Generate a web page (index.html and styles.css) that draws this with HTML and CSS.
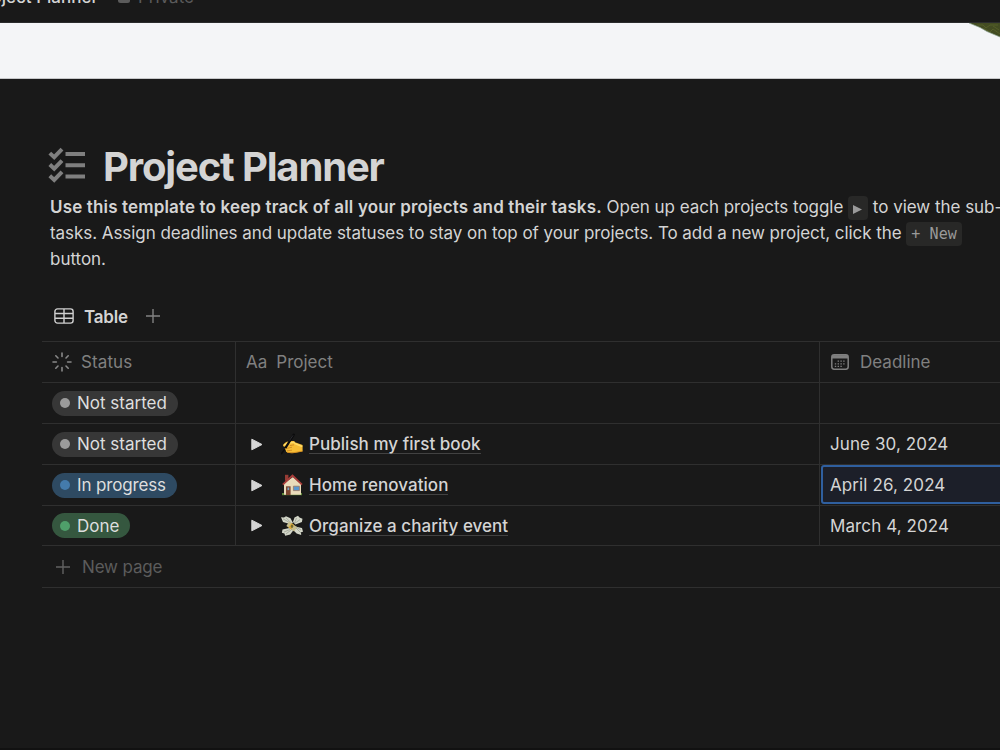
FILE: index.html
```html
<!DOCTYPE html>
<html lang="en">
<head>
    <meta charset="UTF-8" />
    <meta name="viewport" content="width=device-width, initial-scale=1.0"/>
    <title>Project Planner</title>
    <link rel="stylesheet" href="styles.css">
</head>
<body>
<header class="topbar">
    <div class="crumb">Project Planner</div>
    <svg class="lock" viewBox="0 0 14 18"><path d="M4 8V5a3 3 0 0 1 6 0v3" fill="none" stroke="#5b5b5b" stroke-width="1.6"/><rect x="1" y="7" width="12" height="10" rx="2.5" fill="#5b5b5b"/></svg>
    <div class="private">Private</div>
</header>

<div class="cover">
    <svg class="leaf" viewBox="0 0 32 15"><path d="M1 0H32V14L19 8.5 12 4.5Z" fill="#434c22"/><path d="M9 2h6l3 3 4-3h8M15 5l7 4 3-3 7 5M25 3l6 4" fill="none" stroke="#555e29"/><path d="M1 0l11 4.5 7 4L32 14" fill="none" stroke="#8da492" stroke-width=".7"/></svg>
</div>

<main class="page">
    <div class="title">
        <svg class="title-icon" viewBox="0 0 38 36">
            <g fill="none" stroke="#7f7f7f" stroke-width="4">
                <path d="M1.8 6.1l4.4 4.1 7.8-8M1.8 17.5l4.4 4.1 7.8-8M1.8 28.8l4.4 4.1 7.8-8"/>
                <path d="M17.5 7.1H37M17.5 18.2H37M17.5 29.4H37"/>
            </g>
        </svg>
        <h1>Project Planner</h1>
    </div>

    <div class="intro">
        <p><strong>Use this template to keep track of all your projects and their tasks.</strong> <span>Open up each projects toggle</span> <code class="toggle-code"><svg viewBox="0 0 9 9"><path d="M0 0l9 4.5L0 9z" fill="#9a9a9a"/></svg></code> <span>to view the sub-</span></p>
        <p class="line-two">tasks. Assign deadlines and update statuses to stay on top of your projects. To add a new project, click the <code>+ New</code></p>
        <p>button.</p>
    </div>

    <div class="views">
        <svg class="table-icon" viewBox="0 0 20 16"><g fill="none" stroke="#d0d0d0" stroke-width="1.4"><rect x=".9" y=".9" width="18.2" height="14.2" rx="2.6"/><path d="M1 5.5h18M1 10.2h18M10 1v14"/></g></svg>
        <span class="view-name">Table</span>
        <svg class="plus" viewBox="0 0 14 14"><path d="M7 0v14M0 7h14" stroke="#828282" stroke-width="1.4"/></svg>
    </div>

    <div class="table">
        <div class="row head">
            <div class="cell">
                <svg class="status-icon" viewBox="0 0 20 20"><path d="M10 1v3.4M10 15.6V19M1 10h3.4M15.6 10H19M3.8 3.8l2.2 2.2M14 14l2.2 2.2M3.8 16.2L6 14M14 6l2.2-2.2" stroke="#888" stroke-width="1.6" stroke-linecap="round"/></svg>
                <span class="h-status">Status</span>
            </div>
            <div class="cell"><span class="aa">Aa</span><span class="h-project">Project</span></div>
            <div class="cell">
                <svg class="cal-icon" viewBox="0 0 18 16"><rect x=".8" y=".8" width="16.4" height="14.4" rx="2.4" fill="none" stroke="#7f7f7f" stroke-width="1.5"/><path d="M1 2.8h16" stroke="#7f7f7f" stroke-width="3.4"/><path d="M6.6 7.2h8M3.8 9.8h10.8M3.8 12.4h8" stroke="#7f7f7f" stroke-width="1.3" stroke-dasharray="1.4 1.4"/></svg>
                <span class="h-deadline">Deadline</span>
            </div>
        </div>
        <div class="row">
            <div class="cell"><span class="tag"><i></i><b>Not started</b></span></div>
            <div class="cell"></div>
            <div class="cell"></div>
        </div>
        <div class="row">
            <div class="cell"><span class="tag"><i></i><b>Not started</b></span></div>
            <div class="cell">
                <svg class="arrow" viewBox="0 0 12 13"><path d="M.8 1.2L11 6.5.8 11.8z" fill="#d5d5d5" stroke="#d5d5d5" stroke-linejoin="round"/></svg>
                <svg class="emoji" viewBox="0 0 22 22">
                    <path d="M2.5 11.2Q5 8.2 8 8.2L12 8Q13.5 7.6 14 9.2L21.6 12V18.2L16.5 19.2Q11 20.4 6.5 19.4Q4.4 19 5 17.4Q3.2 17 3.8 15.3L6 13.6L3 13.8Q1.2 12.8 2.5 11.2Z" fill="#f6bd35"/>
                    <path d="M3.5 11.8Q7 9.2 13 9.6M14 10.6l6.6 2.6" fill="none" stroke="#ffdc69" stroke-width="1.5" stroke-linecap="round"/>
                    <path d="M5 15.6l6-1.4M6 17.8l5-.6M9 12.6l4-.8" fill="none" stroke="#c98422" stroke-width=".8"/>
                    <path d="M6 19.2q5 1.4 10-.1l5.6-1" fill="none" stroke="#d78e20" stroke-width=".9"/>
                    <path d="M4.8 14.4L12.8 1.6" stroke="#0b0b0c" stroke-width="2.2" stroke-linecap="round"/>
                    <path d="M.6 20.6l3-4.2" stroke="#0b0b0c" stroke-width="1.6" stroke-linecap="round"/>
                    <path d="M8.4 7.6l3.6-5.2" stroke="#3a3a40" stroke-width=".7"/>
                </svg>
                <span class="name">Publish my first book</span>
            </div>
            <div class="cell"><span class="date">June 30, 2024</span></div>
        </div>
        <div class="row">
            <div class="cell"><span class="tag blue"><i></i><b>In progress</b></span></div>
            <div class="cell">
                <svg class="arrow" viewBox="0 0 12 13"><path d="M.8 1.2L11 6.5.8 11.8z" fill="#d5d5d5" stroke="#d5d5d5" stroke-linejoin="round"/></svg>
                <svg class="emoji" viewBox="0 0 22 22">
                    <path d="M1 19h20v2.2H1z" fill="#5d8a37"/>
                    <path d="M4 .8h3.4v6H4z" fill="#963c35"/>
                    <path d="M3 9.5L12 3l8 7v10.8H3z" fill="#eadbbb"/>
                    <path d="M1.8 10.6L11.5 1.6 21 10.6" fill="none" stroke="#a93d3a" stroke-width="1.8"/>
                    <path d="M5 12.3h4.6V21H5z" fill="#7c4630"/><path d="M6.5 13.5h1.7v2.6H6.5z" fill="#78a5c5"/>
                    <path d="M12.4 12.2h6v4.4h-6z" fill="#5a97d0" stroke="#9b7761" stroke-width=".8"/>
                </svg>
                <span class="name">Home renovation</span>
            </div>
            <div class="cell selected"><span class="date">April 26, 2024</span></div>
        </div>
        <div class="row last">
            <div class="cell"><span class="tag green"><i></i><b>Done</b></span></div>
            <div class="cell">
                <svg class="arrow" viewBox="0 0 12 13"><path d="M.8 1.2L11 6.5.8 11.8z" fill="#d5d5d5" stroke="#d5d5d5" stroke-linejoin="round"/></svg>
                <svg class="emoji" viewBox="0 0 22 22">
                    <path d="M9 9L2 7 0 2.2l3 .4L5 1.2l4.5 2L12 8zM12 7l1.5-4.5L17 .8l1.5 1.7 3 1.2-.6 3.4-6.5 2.4zM8.5 13l-7 1.4-.6 3.4 2.5.6.8 2.4 5-1.2 3-4zM14 11.6l7 1.4 1 3.8-2 .5.2 2.6-4.6-1.4-3.4-3.4z" fill="#d3d6c8"/>
                    <path d="M2 3.8l7 4M5 2.8l5 5M15.5 3l-2 5M19 4.6l-5 3.6M3 17l6-2.5M5 19l5-4M15 13l5 5M15 12l5 3" stroke="#959b8d" stroke-width=".7"/>
                    <path d="M8 6.5l8 5.5-2.8 4.5L5.4 11z" fill="#c6bd8c"/><path d="M10.5 8l2.5 2-3 4.5-2.5-2z" fill="#dba936"/>
                    <ellipse cx="11" cy="11.2" rx="1.2" ry="1.8" fill="#716832"/>
                </svg>
                <span class="name">Organize a charity event</span>
            </div>
            <div class="cell"><span class="date">March 4, 2024</span></div>
        </div>
        <div class="new-page">
            <svg class="plus" viewBox="0 0 14 14"><path d="M7 0v14M0 7h14" stroke="#626262" stroke-width="1.4"/></svg>
            <span>New page</span>
        </div>
    </div>
</main>
</body>
</html>
```
FILE: styles.css
```css
* {
    box-sizing: border-box;
}

body {
    margin: 0;
    width: 1000px;
    height: 750px;
    overflow: hidden;
    background-color: #191919;
    color: #d4d4d4;
    font-family: Inter, "Liberation Sans", sans-serif;
    font-size: 17px;
    border-bottom: 2px solid #111;
}

svg {
    display: block;
    flex: none;
}

h1, p {
    margin: 0;
}

.topbar {
    height: 23px;
    display: flex;
    overflow: hidden;
    white-space: nowrap;
    border-bottom: 1px solid #2b2c2d;
    line-height: 24px;
}

.crumb {
    width: 98px;
    display: flex;
    justify-content: flex-end;
    margin-top: -15px;
    font-weight: 500;
}

.lock {
    width: 14px;
    height: 18px;
    margin: -14px 7px 0 19px;
}

.private {
    margin-top: -15px;
    color: #5b5b5b;
}

.cover {
    height: 56px;
    display: flex;
    justify-content: flex-end;
    background-color: #f4f5f7;
    border-bottom: 1px solid #c6c7c9;
}

.leaf {
    width: 32px;
    height: 15px;
}

.page {
    padding: 63px 0 0 42px;
}

.title {
    height: 52px;
    display: flex;
    align-items: flex-start;
    padding-left: 6px;
}

.title-icon {
    width: 38px;
    height: 36px;
    margin-top: 5px;
}

h1 {
    margin-left: 17px;
    font-size: 40px;
    line-height: 50px;
    font-weight: 700;
    letter-spacing: -1.15px;
    white-space: nowrap;
}

.intro {
    padding-left: 8px;
    line-height: 26px;
    letter-spacing: -0.03px;
    white-space: nowrap;
}

.intro p {
    height: 26px;
}

.intro .line-two {
    letter-spacing: -0.055px;
}

strong {
    font-weight: 600;
    letter-spacing: 0.15px;
}

code {
    display: inline-block;
    height: 24px;
    padding: 0 5px;
    border-radius: 4px;
    background-color: #282827;
    color: #9a9a9a;
    font-family: "DejaVu Sans Mono", monospace;
    font-size: 15px;
    line-height: 24px;
    letter-spacing: 0.1px;
}

.toggle-code {
    width: 20px;
    padding: 9px 5px 0;
    vertical-align: -7px;
}

.toggle-code svg {
    width: 9px;
    height: 9px;
}

.views {
    display: flex;
    align-items: center;
    height: 69px;
    padding: 20px 0 0 12px;
}

.table-icon {
    width: 20px;
    height: 16px;
    margin-top: -1px;
}

.view-name {
    margin-left: 10px;
    font-weight: 600;
    letter-spacing: -0.2px;
}

.plus {
    width: 14px;
    height: 14px;
}

.views .plus {
    margin-left: 18px;
    margin-top: -1px;
}

.row {
    display: grid;
    grid-template-columns: 194px 584px 180px;
    height: 41px;
    border-top: 1px solid #2f2f2f;
}

.cell {
    display: flex;
    align-items: center;
    padding-left: 10px;
    border-right: 1px solid #2f2f2f;
    white-space: nowrap;
}

.cell:last-child {
    border-right: none;
}

.head {
    color: #808080;
}

.status-icon {
    width: 20px;
    height: 20px;
}

.h-status {
    margin-left: 9px;
    letter-spacing: 0.1px;
}

.h-project {
    margin-left: 9px;
}

.cal-icon {
    width: 18px;
    height: 16px;
    margin-left: 1px;
}

.h-deadline {
    margin-left: 11px;
}

.tag {
    display: flex;
    align-items: center;
    height: 25px;
    padding: 0 11px 0 8px;
    border-radius: 13px;
    background-color: #373737;
    color: #dedede;
}

.tag i {
    width: 10px;
    height: 10px;
    margin-right: 7px;
    border-radius: 50%;
    background-color: #9b9b9b;
}

.tag b {
    font-weight: 400;
}

.blue {
    background-color: #2e4a62;
    letter-spacing: -0.15px;
}

.blue i {
    background-color: #447bac;
}

.green {
    background-color: #35573f;
}

.green i {
    background-color: #4f9f6a;
}

.arrow {
    width: 12px;
    height: 13px;
    margin-left: 5px;
}

.emoji {
    width: 22px;
    height: 22px;
    margin-left: 18px;
}

.name {
    height: 20px;
    margin-left: 6px;
    line-height: 20px;
    font-weight: 500;
    letter-spacing: 0.04px;
    border-bottom: 1px solid #424242;
}

.date {
    letter-spacing: 0.1px;
}

.cell.selected {
    margin: 0 -4px 1px 1px;
    padding-left: 7px;
    border: 2px solid #2f5f9f;
    border-radius: 3px;
    background-color: #1c1f29;
}

.last {
    height: 40px;
}

.new-page {
    display: flex;
    align-items: center;
    height: 43px;
    padding-left: 14px;
    border-top: 1px solid #2f2f2f;
    border-bottom: 1px solid #2f2f2f;
    color: #5c5c5c;
}

.new-page span {
    margin-left: 12px;
    letter-spacing: -0.15px;
}
```
